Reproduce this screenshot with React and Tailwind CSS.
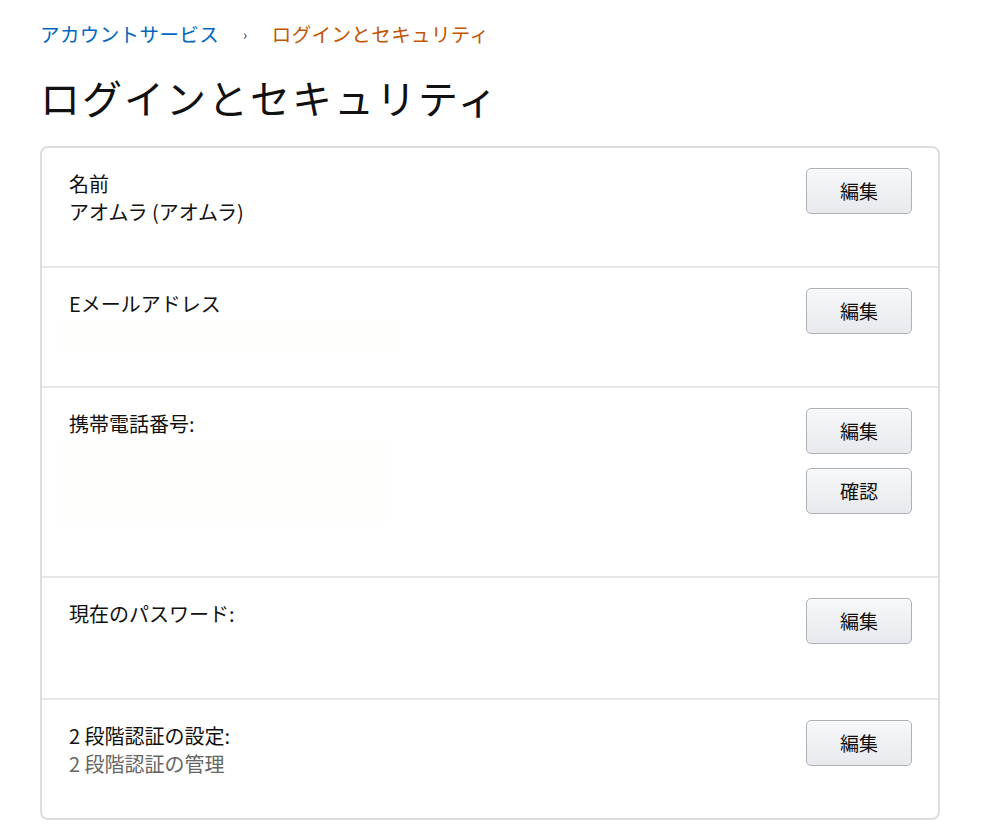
const font = { fontFamily: '"Noto Sans CJK JP", "Noto Sans", sans-serif' }

function EditButton({ children }) {
  return (
    <button className="flex h-[46px] w-[106px] items-center justify-center rounded-[5px] border border-[#adb1b8] bg-gradient-to-b from-[#f7f8fa] to-[#e7e9ec] text-[19px] text-[#111] shadow-[0_1px_0_rgba(255,255,255,0.6)_inset]">
      {children}
    </button>
  )
}

function Row({ height, last, children, buttons }) {
  return (
    <div
      className={`flex justify-between pl-[27px] pr-[26px] pt-5 ${last ? '' : 'border-b-2 border-[#e7e7e7]'} ${height}`}
    >
      <div className="pt-[2px] text-[20px] leading-[28px] text-[#111]">{children}</div>
      <div className="flex flex-col gap-[14px]">{buttons}</div>
    </div>
  )
}

export default function App() {
  return (
    <div className="min-h-screen bg-white px-10 pt-5" style={font}>
      <nav className="flex items-center text-[19.5px] leading-[28px] tracking-[0.4px]">
        <span className="text-[#0066c0]">アカウントサービス</span>
        <span className="ml-[24px] mr-[24px] text-[14px] text-[#333]">›</span>
        <span className="text-[#c45500]">ログインとセキュリティ</span>
      </nav>

      <h1 className="mt-[25px] text-[40px] font-normal leading-[48px] tracking-[2px] text-[#111]">
        ログインとセキュリティ
      </h1>

      <div className="mt-[25px] w-[900px] overflow-hidden rounded-[8px] border-2 border-[#dddddd]">
        <Row height="h-[120px]" buttons={<EditButton>編集</EditButton>}>
          <div>名前</div>
          <div>アオムラ (アオムラ)</div>
        </Row>

        <Row height="h-[120px]" buttons={<EditButton>編集</EditButton>}>
          <div>Eメールアドレス</div>
          <div className="-ml-[14px] mt-[2px] h-[32px] w-[345px] bg-[#fefefd]" />
        </Row>

        <Row
          height="h-[190px]"
          buttons={
            <>
              <EditButton>編集</EditButton>
              <EditButton>確認</EditButton>
            </>
          }
        >
          <div>携帯電話番号:</div>
          <div className="-ml-[13px] mt-[2px] h-[82px] w-[330px] bg-[#fefefd]" />
        </Row>

        <Row height="h-[122px]" buttons={<EditButton>編集</EditButton>}>
          <div>現在のパスワード:</div>
        </Row>

        <Row height="h-[118px]" last buttons={<EditButton>編集</EditButton>}>
          <div>2 段階認証の設定:</div>
          <div className="text-[#666]">2 段階認証の管理</div>
        </Row>
      </div>
    </div>
  )
}
